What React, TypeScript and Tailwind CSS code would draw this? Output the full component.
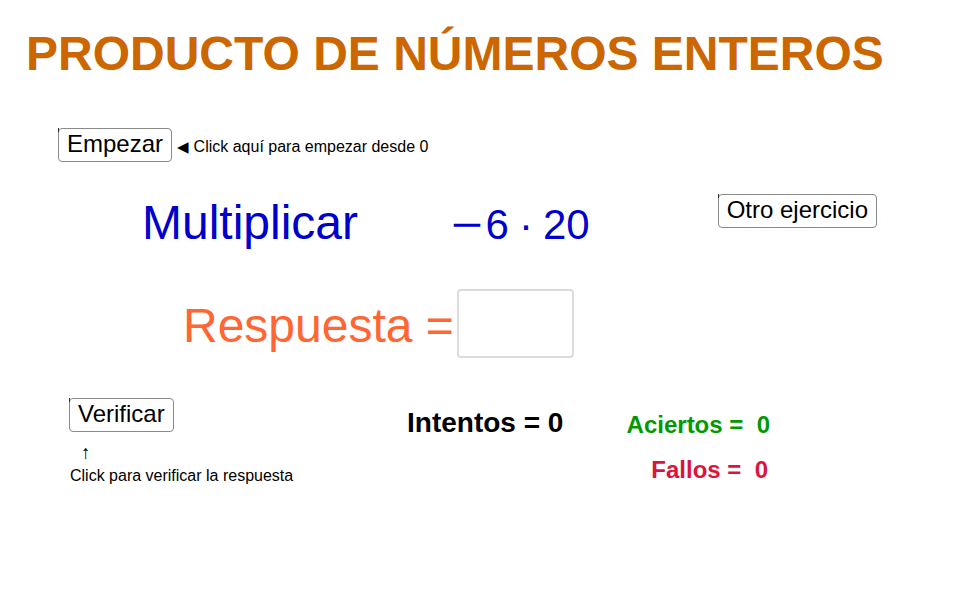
import type { ReactNode } from 'react'

function GgbButton({ children }: { children: ReactNode }) {
  return (
    <button className="relative h-[34px] px-[8px] pb-[2px] flex items-center rounded-[4px] border border-[#8a8a8a] bg-white text-[24px] leading-none text-black">
      <span className="absolute -top-px -left-px w-px h-[4px] bg-[#333]" />
      {children}
    </button>
  )
}

export default function App() {
  return (
    <div className="w-[958px] h-[606px] bg-white overflow-hidden font-['Liberation_Sans',Arial,sans-serif]">
      {/* title */}
      <div className="h-[128px] pt-[30px] pl-[26px]">
        <h1 className="text-[48px] leading-none font-bold text-[#cc6600]">PRODUCTO DE NÚMEROS ENTEROS</h1>
      </div>

      {/* empezar */}
      <div className="h-[66px] pl-[58px] flex items-start">
        <GgbButton>Empezar</GgbButton>
        <span className="ml-[5px] mt-[11px] text-[16px] leading-none text-black flex items-center">
          <span className="text-[15px] mr-[5px] font-['DejaVu_Sans',sans-serif]">◀</span>
          Click aquí para empezar desde 0
        </span>
      </div>

      {/* exercise */}
      <div className="h-[95px] flex items-start">
        <span className="ml-[142px] mt-[5px] text-[48px] leading-none text-[#0000cc]">Multiplicar</span>
        <span className="ml-[93px] mt-[10px] flex items-baseline text-[42px] leading-none text-[#0000cc]">
          <span className="inline-block origin-left scale-x-[1.3]">−</span>
          <span className="ml-[10px]">6</span>
          <span className="ml-[10px]">·</span>
          <span className="ml-[10px]">20</span>
        </span>
        <div className="ml-auto mr-[81px]">
          <GgbButton>Otro ejercicio</GgbButton>
        </div>
      </div>

      {/* answer */}
      <div className="h-[109px] flex items-start">
        <span className="ml-[183px] mt-[13px] text-[48px] leading-none text-[#ff6633] whitespace-pre">Respuesta =</span>
        <div className="ml-[3px] w-[117px] h-[69px] rounded-[4px] border-2 border-[#dcdcdc] bg-white" />
      </div>

      {/* verify + counters */}
      <div className="flex items-start">
        <div className="w-[407px] pl-[69px] flex flex-col items-start">
          <GgbButton>Verificar</GgbButton>
          <span className="ml-[12px] mt-[11px] text-[19px] leading-none text-black">↑</span>
          <span className="ml-[1px] mt-[6px] text-[16px] leading-none text-black">Click para verificar la respuesta</span>
        </div>
        <span className="mt-[11px] text-[28px] leading-none font-bold text-black whitespace-pre">Intentos = 0</span>
        <div className="ml-auto mr-[188px] mt-[15px] flex flex-col items-end text-[24px] leading-none font-bold">
          <span className="text-[#009900] whitespace-pre">Aciertos =  0</span>
          <span className="mt-[21px] mr-[2px] text-[#dc143c] whitespace-pre">Fallos =  0</span>
        </div>
      </div>
    </div>
  )
}
